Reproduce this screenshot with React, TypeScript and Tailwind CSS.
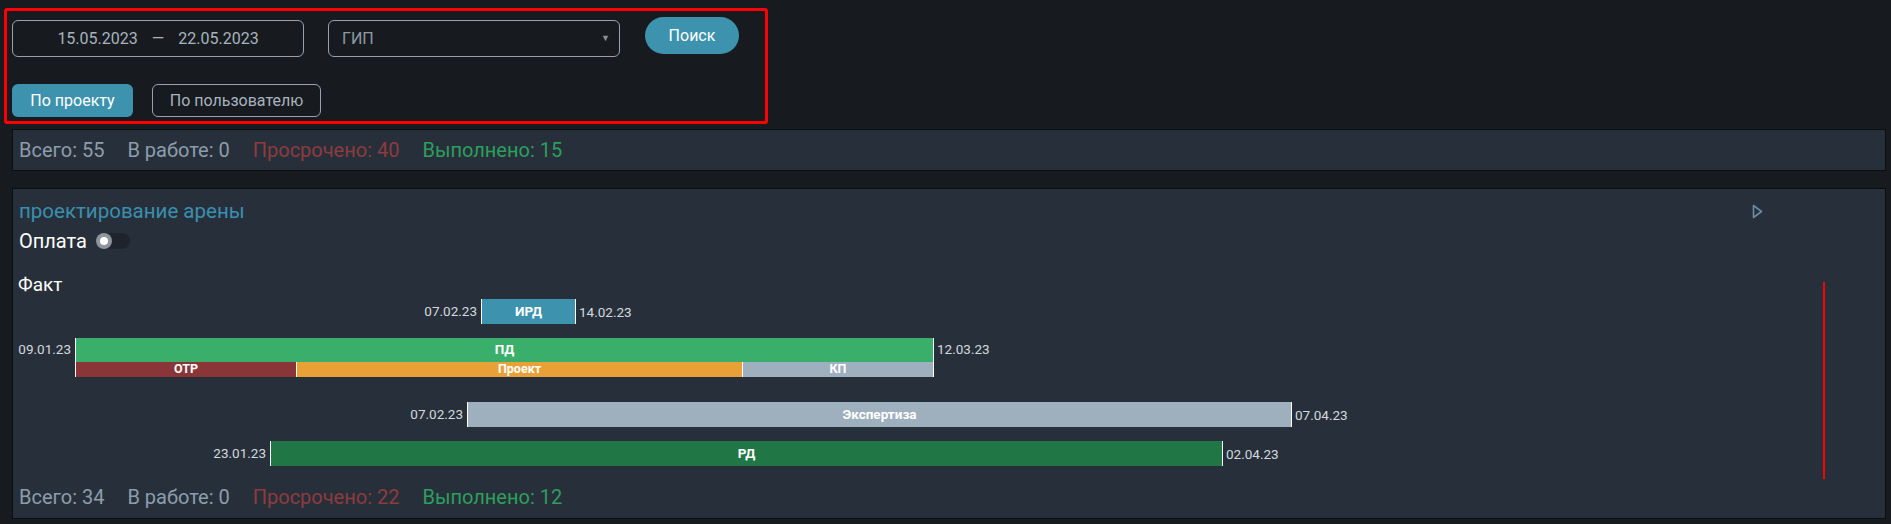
import React from 'react';

type Stat = { total: number; inWork: number; overdue: number; done: number };

const Stats: React.FC<Stat> = ({ total, inWork, overdue, done }) => (
  <div className="flex gap-[23px] text-[20px] leading-6 whitespace-nowrap">
    <span className="text-[#8d9dac]">Всего: {total}</span>
    <span className="text-[#8d9dac]">В работе: {inWork}</span>
    <span className="text-[#8e3b3e]">Просрочено: {overdue}</span>
    <span className="text-[#2c9f5c]">Выполнено: {done}</span>
  </div>
);

// gantt origin is the card's inner left edge (x = 13 on the page)
const ORIGIN = 13;

type BarRow = {
  left: number;
  right: number;
  label: string;
  color: string;
  start: string;
  end: string;
  mt: string;
};

const DateLabel: React.FC<{ text: string }> = ({ text }) => (
  <span className="text-[13.5px] text-[#d3d9de] leading-none">{text}</span>
);

const Bar: React.FC<BarRow> = ({ left, right, label, color, start, end, mt }) => (
  <div className={`flex items-center h-[25px] ${mt}`}>
    <div className="flex justify-end pr-[4px] shrink-0" style={{ width: left - ORIGIN }}>
      <DateLabel text={start} />
    </div>
    <div
      className={`h-full flex items-center justify-center border-x border-white shrink-0 ${color}`}
      style={{ width: right - left }}
    >
      <span className="text-white font-bold text-[13.5px] leading-none">{label}</span>
    </div>
    <div className="pl-[3px]">
      <DateLabel text={end} />
    </div>
  </div>
);

const PlayIcon = () => (
  <svg width="11" height="15" viewBox="0 0 11 15" fill="none">
    <path d="M1.5 1.5 L9.5 7.5 L1.5 13.5 Z" stroke="#6a8ba5" strokeWidth="1.6" strokeLinejoin="round" />
  </svg>
);

const App: React.FC = () => {
  const subs = [
    { label: 'ОТР', w: 220, color: 'bg-[#8a3538]' },
    { label: 'Проект', w: 446, color: 'bg-[#e9a137]' },
    { label: 'КП', w: 193, color: 'bg-[#9eafbd]' },
  ];

  return (
    <div className="min-h-[524px] bg-[#171b1f] font-[Roboto,'Noto_Sans',sans-serif] pt-[8px] pb-[7px]">
      {/* filters, outlined in red */}
      <div className="ml-[4px] w-[764px] h-[116px] border-[3px] border-[#ff0000] rounded-[3px] pl-[5px] pt-[6px]">
        <div className="flex items-start">
          <div className="mt-[3px] w-[292px] h-[37px] border border-[#9ba1a7] rounded-[6px] flex items-center justify-center gap-[14px] text-[16px] text-[#a8b3bd]">
            <span>15.05.2023</span>
            <span>—</span>
            <span>22.05.2023</span>
          </div>
          <div className="mt-[3px] ml-[24px] w-[292px] h-[37px] border border-[#9ba1a7] rounded-[6px] flex items-center justify-between pl-[13px] pr-[9px] text-[16px] text-[#8d9aa6]">
            <span>ГИП</span>
            <span className="text-[9px] text-[#8a8f94]">▼</span>
          </div>
          <button className="ml-[25px] w-[94px] h-[37px] rounded-full bg-[#3d93ae] text-white text-[16px]">
            Поиск
          </button>
        </div>
        <div className="flex gap-[19px] mt-[27px]">
          <button className="w-[121px] h-[33px] rounded-[6px] bg-[#3d93ae] text-white text-[16px]">
            По проекту
          </button>
          <button className="w-[169px] h-[33px] rounded-[6px] border border-[#9ba1a7] text-[#a8b3bd] text-[16px]">
            По пользователю
          </button>
        </div>
      </div>

      <div className="pl-[12px] pr-[5px]">
        {/* overall summary */}
        <div className="mt-[5px] h-[42px] bg-[#27303a] border border-[#0b0e11] flex items-center pl-[6px]">
          <Stats total={55} inWork={0} overdue={40} done={15} />
        </div>

        {/* project card */}
        <div className="relative mt-[17px] bg-[#27303a] border border-[#0b0e11] pt-[10px] pb-[9px]">
          <div className="flex items-center justify-between pl-[6px] pr-[122px]">
            <span className="text-[20.5px] leading-6 text-[#3a8fb0]">проектирование арены</span>
            <PlayIcon />
          </div>
          <div className="flex items-center mt-[6px] pl-[6px]">
            <span className="text-[20px] leading-6 text-white">Оплата</span>
            <div className="ml-[9px] w-[34px] h-[16px] rounded-full bg-[#1d242b] flex items-center">
              <div className="w-[16px] h-[16px] rounded-full bg-[#8e959c] flex items-center justify-center">
                <div className="w-[8px] h-[8px] rounded-full bg-white" />
              </div>
            </div>
          </div>
          <div className="mt-[20px] pl-[5px] text-[19px] leading-6 text-white">Факт</div>

          <Bar left={481} right={576} label="ИРД" color="bg-[#3d93ae]" start="07.02.23" end="14.02.23" mt="mt-[2px]" />

          {/* ПД with its stages */}
          <div className="flex items-start mt-[14px]">
            <div className="flex justify-end items-center pr-[4px] h-[24px] shrink-0" style={{ width: 75 - ORIGIN }}>
              <DateLabel text="09.01.23" />
            </div>
            <div className="border-x border-white shrink-0" style={{ width: 934 - 75 }}>
              <div className="h-[24px] bg-[#3aaf6b] flex items-center justify-center">
                <span className="text-white font-bold text-[13.5px] leading-none">ПД</span>
              </div>
              <div className="flex h-[15px]">
                {subs.map((s, i) => (
                  <div
                    key={s.label}
                    className={`${s.color} flex items-center justify-center ${i > 0 ? 'border-l border-white' : ''} ${i === subs.length - 1 ? 'flex-1' : 'shrink-0'}`}
                    style={i === subs.length - 1 ? undefined : { width: s.w }}
                  >
                    <span className="text-white font-bold text-[12.5px] leading-none">{s.label}</span>
                  </div>
                ))}
              </div>
            </div>
            <div className="pl-[3px] h-[24px] flex items-center">
              <DateLabel text="12.03.23" />
            </div>
          </div>

          <Bar left={467} right={1292} label="Экспертиза" color="bg-[#9eafbd]" start="07.02.23" end="07.04.23" mt="mt-[25px]" />
          <Bar left={270} right={1223} label="РД" color="bg-[#217645]" start="23.01.23" end="02.04.23" mt="mt-[14px]" />

          <div className="mt-[19px] pl-[6px]">
            <Stats total={34} inWork={0} overdue={22} done={12} />
          </div>

          {/* today marker */}
          <div className="absolute left-[1810px] top-[93px] w-[2px] h-[197px] bg-[#ff0000]" />
        </div>
      </div>
    </div>
  );
};

export default App;
